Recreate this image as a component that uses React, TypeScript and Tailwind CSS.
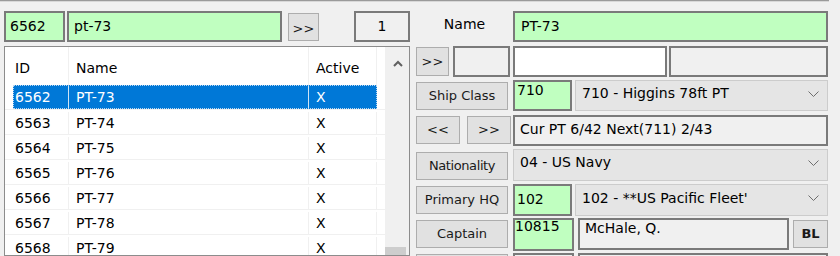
import React from "react";

const rows = [
  ["6562", "PT-73"],
  ["6563", "PT-74"],
  ["6564", "PT-75"],
  ["6565", "PT-76"],
  ["6566", "PT-77"],
  ["6567", "PT-78"],
  ["6568", "PT-79"],
];

function Chevron() {
  return (
    <svg width="11" height="6" viewBox="0 0 11 6" className="shrink-0 relative -top-[2px]">
      <path d="M0.5 0.5 L5.5 5.5 L10.5 0.5" stroke="#6e6e6e" strokeWidth="1" fill="none" />
    </svg>
  );
}

function List() {
  return (
    <div className="mt-[4px] h-[210px] border border-[#8c8c8c] bg-white flex overflow-hidden">
      <div className="w-[380px] flex flex-col shrink-0">
        <div className="h-[38px] flex pl-[8px] shrink-0">
          <div className="w-[56px] border-r border-[#f0f0f0] pl-[2px] pt-[4px] flex items-center">ID</div>
          <div className="w-[240px] border-r border-[#f0f0f0] pl-[7px] pt-[4px] flex items-center">Name</div>
          <div className="w-[68px] border-r border-[#f0f0f0] pl-[7px] pt-[4px] flex items-center">Active</div>
        </div>
        {rows.map(([id, name], i) => {
          const sel = i === 0;
          return (
            <div key={id} className="h-[25px] shrink-0 border-b border-[#f0f0f0] flex pl-[8px]">
              {sel ? (
                <div className="relative flex bg-[#0078d7] text-white">
                  <div className="w-[56px] border-r border-[#cfe3f5] pl-[2px] flex items-center">{id}</div>
                  <div className="w-[240px] border-r border-[#cfe3f5] pl-[7px] flex items-center">{name}</div>
                  <div className="w-[68px] pl-[7px] flex items-center">X</div>
                  <div className="absolute inset-0 border border-dotted border-[#b9d7f2]" />
                </div>
              ) : (
                <div className="flex text-black pt-[2px]">
                  <div className="w-[56px] border-r border-[#f0f0f0] pl-[2px] flex items-center">{id}</div>
                  <div className="w-[240px] border-r border-[#f0f0f0] pl-[7px] flex items-center">{name}</div>
                  <div className="w-[68px] border-r border-[#f0f0f0] pl-[7px] flex items-center">X</div>
                </div>
              )}
            </div>
          );
        })}
      </div>
      <div className="w-[24px] bg-[#f0f0f0] flex flex-col shrink-0">
        <div className="flex justify-center pt-[13px] pl-[1px]">
          <svg width="10" height="7" viewBox="0 0 10 7">
            <path d="M1 6 L5 2 L9 6" stroke="#606060" strokeWidth="2" fill="none" />
          </svg>
        </div>
        <div className="flex-1" />
        <div className="h-[8px] w-[21px] bg-[#cdcdcd]" />
      </div>
    </div>
  );
}

const btn =
  "bg-[#e1e1e1] border border-[#adadad] text-[13px] text-[#1a1a1a] flex items-center justify-center whitespace-nowrap shrink-0";
const combo =
  "h-[31px] bg-[#e5e5e5] border border-[#cccccc] flex items-center justify-between pl-[6px] pr-[8px] whitespace-nowrap shrink-0";

export default function App() {
  return (
    <div className="w-[840px] h-[256px] bg-[#f0f0f0] overflow-hidden font-['DejaVu_Sans',sans-serif] text-[14px] text-black">
      <div className="h-[1px] w-[829px] bg-[#9a9a9a]" />
      <div className="h-[1px] w-[829px] bg-[#d8d8d8]" />
      <div className="flex pt-[9px] pl-[4px]">
        {/* Left column */}
        <div className="w-[406px] shrink-0 flex flex-col">
          <div className="h-[31px] flex items-start">
            <div className="w-[61px] h-[31px] border-2 border-[#7a7a7a] bg-[#c0ffc0] pl-[4px] pt-[5px] leading-[16px] shrink-0">6562</div>
            <div className="ml-[2px] w-[215px] h-[31px] border-2 border-[#7a7a7a] bg-[#c0ffc0] pl-[5px] pt-[5px] leading-[16px] shrink-0">pt-73</div>
            <div className={btn + " ml-[6px] mt-[2px] w-[31px] h-[28px] pt-[4px] text-[11px]"}>&gt;&gt;</div>
            <div className="ml-[35px] w-[56px] h-[31px] border-2 border-[#7a7a7a] bg-[#f0f0f0] text-center pt-[5px] leading-[16px] shrink-0">1</div>
          </div>
          <List />
        </div>

        {/* Right column */}
        <div className="ml-[6px] w-[412px] shrink-0 flex flex-col">
          {/* Row 1 */}
          <div className="h-[31px] flex items-start">
            <div className="w-[97px] h-[31px] text-center pt-[5px] leading-[16px] shrink-0">Name</div>
            <div className="w-[315px] h-[31px] border-2 border-[#7a7a7a] bg-[#c0ffc0] pl-[6px] pt-[5px] leading-[16px] shrink-0">PT-73</div>
          </div>
          {/* Row 2 */}
          <div className="mt-[4px] h-[31px] flex items-start">
            <div className={btn + " mt-[1px] w-[33px] h-[29px] text-[11px]"}>&gt;&gt;</div>
            <div className="ml-[4px] w-[57px] h-[31px] border-2 border-[#7a7a7a] bg-[#f0f0f0] shrink-0" />
            <div className="ml-[3px] w-[154px] h-[31px] border-2 border-[#7a7a7a] bg-white shrink-0" />
            <div className="ml-[2px] w-[159px] h-[31px] border-2 border-[#7a7a7a] bg-[#f0f0f0] shrink-0" />
          </div>
          {/* Row 3 */}
          <div className="mt-[3px] h-[31px] flex items-start">
            <div className={btn + " mt-[2px] w-[92px] h-[28px]"}>Ship Class</div>
            <div className="ml-[5px] w-[59px] h-[31px] border-2 border-[#7a7a7a] bg-[#c0ffc0] pl-[2px] leading-[14px] pt-[1px] shrink-0">710</div>
            <div className={combo + " ml-[3px] w-[253px]"}>
              <span className="relative -top-[2px]">710 - Higgins 78ft PT</span>
              <Chevron />
            </div>
          </div>
          {/* Row 4 */}
          <div className="mt-[4px] h-[31px] flex items-start">
            <div className={btn + " mt-[1px] w-[44px] h-[28px] text-[11px]"}>&lt;&lt;</div>
            <div className={btn + " ml-[7px] mt-[1px] w-[44px] h-[28px] text-[11px]"}>&gt;&gt;</div>
            <div className="ml-[2px] w-[315px] h-[31px] border-2 border-[#7a7a7a] bg-[#f0f0f0] pl-[5px] pt-[4px] leading-[16px] whitespace-nowrap shrink-0">Cur PT 6/42 Next(711) 2/43</div>
          </div>
          {/* Row 5 */}
          <div className="mt-[3px] h-[32px] flex items-start">
            <div className={btn + " mt-[3px] w-[92px] h-[28px] tracking-[-0.4px]"}>Nationality</div>
            <div className={combo + " ml-[5px] w-[315px] h-[32px] pl-[4px]"}>
              <span className="relative -top-[3px]">04 - US Navy</span>
              <Chevron />
            </div>
          </div>
          {/* Row 6 */}
          <div className="mt-[3px] h-[32px] flex items-start">
            <div className={btn + " mt-[2px] w-[92px] h-[28px]"}>Primary HQ</div>
            <div className="ml-[5px] w-[59px] h-[32px] border-2 border-[#7a7a7a] bg-[#c0ffc0] pl-[2px] pt-[5px] leading-[16px] shrink-0">102</div>
            <div className={combo + " ml-[3px] w-[253px] h-[32px]"}>
              <span className="relative -top-[2px]">102 - **US Pacific Fleet'</span>
              <Chevron />
            </div>
          </div>
          {/* Row 7 */}
          <div className="mt-[2px] h-[33px] flex items-start">
            <div className={btn + " mt-[2px] w-[92px] h-[28px]"}>Captain</div>
            <div className="ml-[5px] w-[61px] h-[33px] border-2 border-[#7a7a7a] bg-[#c0ffc0] pl-[0px] leading-[14px] shrink-0 overflow-hidden">
              <span className="relative -top-[1px]">10815</span>
            </div>
            <div className="ml-[4px] w-[211px] h-[32px] border-2 border-[#7a7a7a] bg-[#f0f0f0] pl-[5px] leading-[14px] pt-[1px] shrink-0">McHale, Q.</div>
            <div className={btn + " ml-[4px] mt-[2px] w-[35px] h-[28px] text-[12px] font-bold"}>BL</div>
          </div>
          {/* Row 8 (partially visible) */}
          <div className="mt-[2px] h-[31px] flex items-start">
            <div className={btn + " mt-[1px] w-[92px] h-[28px]"}>&nbsp;</div>
            <div className="ml-[5px] w-[61px] h-[31px] border-2 border-[#7a7a7a] bg-[#f0f0f0] shrink-0" />
            <div className="ml-[4px] w-[250px] h-[31px] border-2 border-[#7a7a7a] bg-[#f0f0f0] shrink-0" />
          </div>
        </div>
      </div>
    </div>
  );
}
